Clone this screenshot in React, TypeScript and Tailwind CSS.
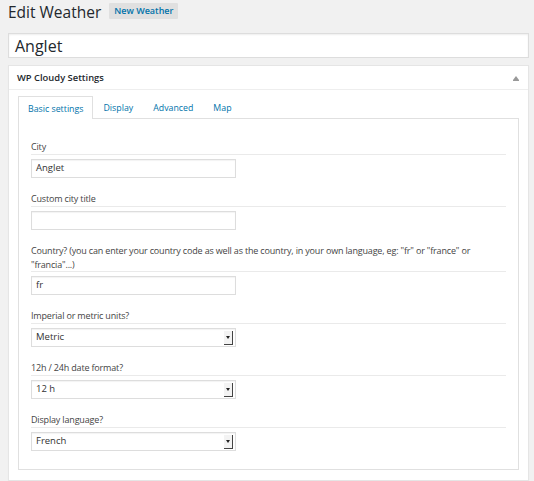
import React from "react";

const font = { fontFamily: '"Open Sans", "Liberation Sans", sans-serif' };

const SelectArrow: React.FC = () => (
  <span className="absolute right-[2px] top-[2px] flex h-[14px] w-[9px] items-center justify-center border-r border-b border-[#444] bg-[#f3f3f3]">
    <span className="h-0 w-0 border-x-[2.5px] border-t-[3px] border-x-transparent border-t-[#222]" />
  </span>
);

interface FieldProps {
  label: React.ReactNode;
  value?: string;
  select?: boolean;
  first?: boolean;
}

const Field: React.FC<FieldProps> = ({ label, value = "", select, first }) => (
  <div className={first ? "" : "mt-[14px]"}>
    <div className="border-b border-[#eaeaea] text-[9px] leading-[14px] tracking-[-0.17px] text-[#444]">{label}</div>
    <div className="relative mt-[4px] flex h-[19px] w-[205px] items-center border border-[#ddd] bg-white px-[4px] text-[9.5px] text-[#333] shadow-[inset_0_1px_1px_rgba(0,0,0,0.05)]">
      {value}
      {select && <SelectArrow />}
    </div>
  </div>
);

export default function App() {
  const tabs = ["Basic settings", "Display", "Advanced", "Map"];
  return (
    <div className="h-[481px] w-full overflow-hidden bg-[#f1f1f1] pl-[8px] pr-[5px]" style={font}>
      <div className="flex h-[33px] items-start pt-[3px]">
        <h1 className="text-[15.5px] leading-[18px] text-[#23282d]">Edit Weather</h1>
        <span className="ml-[8px] flex h-[16px] items-center rounded-[1px] bg-[#e0e0e0] px-[5px] text-[9px] font-semibold text-[#0073aa]">
          New Weather
        </span>
      </div>
      <div className="flex h-[25px] items-center border border-[#ddd] bg-white px-[6px] text-[16px] text-[#23282d] shadow-[inset_0_1px_2px_rgba(0,0,0,0.07)]">
        Anglet
      </div>
      <div className="mt-[7px] border border-[#e5e5e5] bg-white shadow-[0_1px_1px_rgba(0,0,0,0.04)]">
        <div className="flex h-[24px] items-center justify-between border-b border-[#eee] pt-[2px] pl-[8px] pr-[9px]">
          <span className="text-[9.4px] font-semibold text-[#23282d]">WP Cloudy Settings</span>
          <span className="flex flex-col items-center">
            <span className="h-0 w-0 border-x-[3px] border-b-[4px] border-x-transparent border-b-[#999]" />
            <span className="h-px w-[6px] bg-[#999]" />
          </span>
        </div>
        <div className="px-[9px] pt-[6px] pb-[10px]">
          <div className="flex h-[22px]">
            {tabs.map((t, i) => (
              <div
                key={t}
                className={
                  i === 0
                    ? "relative -mb-px flex items-center border border-b-0 border-[#e0e0e0] bg-white px-[9px] pt-[3px] text-[8.8px] text-[#0073aa]"
                    : "flex items-center px-[10px] pt-[3px] text-[8.8px] text-[#0073aa]"
                }
              >
                {t}
              </div>
            ))}
          </div>
          <div className="border border-[#e0e0e0] bg-white px-[12px] pt-[21px] pb-[18px]">
            <Field first label="City" value="Anglet" />
            <Field label="Custom city title" />
            <Field
              label={
                <span className="block leading-[13.5px]">
                  <span className="whitespace-nowrap">
                    Country? (you can enter your country code as well as the country, in your own language, eg: "fr" or "france" or
                  </span>
                  <br />
                  "francia"...)
                </span>
              }
              value="fr"
            />
            <Field label="Imperial or metric units?" value="Metric" select />
            <Field label="12h / 24h date format?" value="12 h" select />
            <Field label="Display language?" value="French" select />
          </div>
        </div>
      </div>
    </div>
  );
}
